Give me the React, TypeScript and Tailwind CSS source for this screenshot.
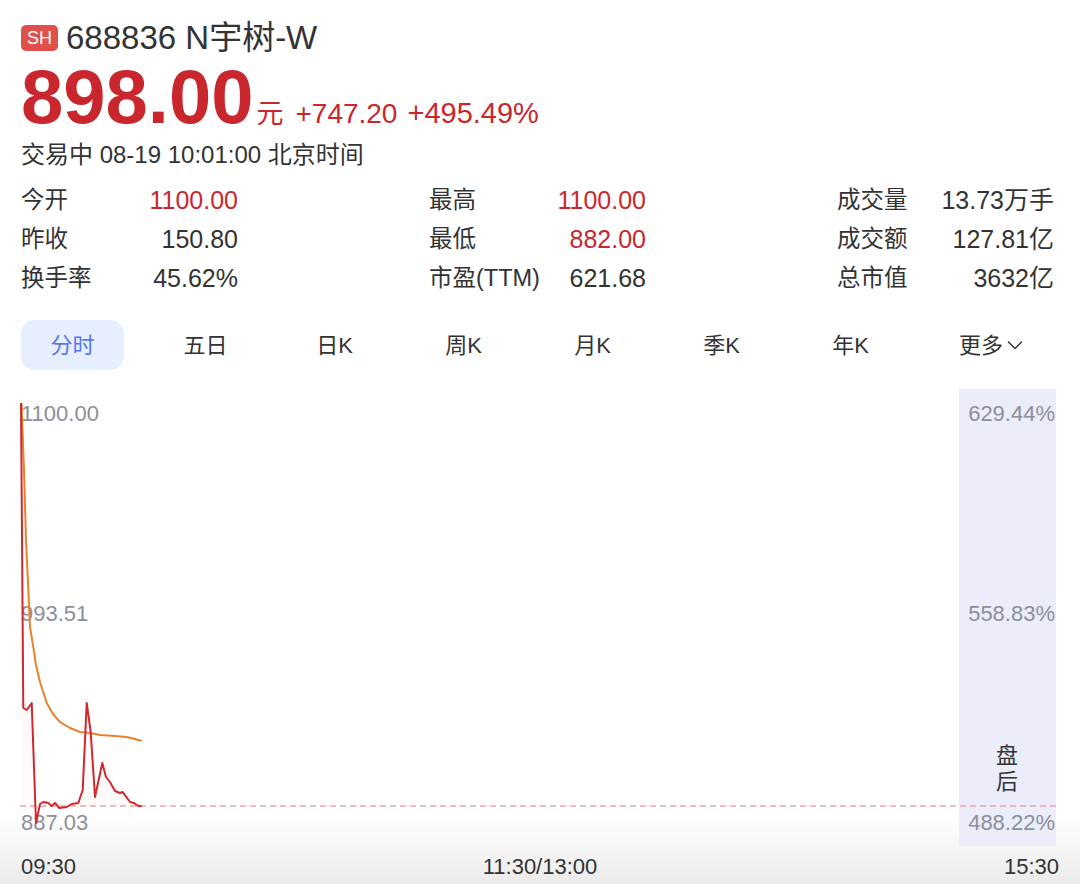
import React from "react";

// intraday quote card for a newly listed stock
const FONT = "'Liberation Sans','Noto Sans CJK SC',sans-serif";

const stats: { label: string; value: string; red?: boolean }[][] = [
  [
    { label: "今开", value: "1100.00", red: true },
    { label: "最高", value: "1100.00", red: true },
    { label: "成交量", value: "13.73万手" },
  ],
  [
    { label: "昨收", value: "150.80" },
    { label: "最低", value: "882.00", red: true },
    { label: "成交额", value: "127.81亿" },
  ],
  [
    { label: "换手率", value: "45.62%" },
    { label: "市盈(TTM)", value: "621.68" },
    { label: "总市值", value: "3632亿" },
  ],
];

const tabs = ["五日", "日K", "周K", "月K", "季K", "年K"];

// price line, already in chart coordinates
const pricePts: [number, number][] = [
  [21, 14], [23.3, 319], [26.7, 321], [31.7, 314], [36, 434], [40, 415],
  [43.3, 413], [48.3, 414], [51.7, 417], [55, 414], [59.3, 419], [66.7, 418],
  [71.7, 415], [78.3, 414], [82.7, 401], [86.7, 314], [90.7, 343], [95, 408],
  [102.3, 374], [106, 388], [110, 393], [115, 402], [120, 404], [122.7, 403],
  [130, 413], [134, 414], [138.3, 417], [141.7, 417],
];

// average price line
const avgPts: [number, number][] = [
  [21.5, 14], [24, 81], [26, 151], [28.3, 201], [30, 238], [33.3, 258],
  [36, 276], [40, 293], [46.7, 314], [53, 325], [60, 333], [70, 339],
  [80, 343], [90, 344], [100, 346], [115, 347], [126.7, 348], [135, 350],
  [141.7, 352],
];

const toPath = (pts: [number, number][]) =>
  pts.map(([x, y], i) => `${i === 0 ? "M" : "L"}${x} ${y}`).join(" ");

function Chart() {
  const fillPath = `${toPath(pricePts)} L141.7 417 L21 417 Z`;
  return (
    <svg width={1080} height={460} viewBox="0 0 1080 460" className="block">
      <defs>
        <linearGradient id="priceFill" x1="0" y1="0" x2="0" y2="1">
          <stop offset="0%" stopColor="#e23a3a" stopOpacity="0.06" />
          <stop offset="100%" stopColor="#e23a3a" stopOpacity="0.02" />
        </linearGradient>
      </defs>
      <rect x={959} y={0} width={97} height={457} fill="#ebedfb" />
      <path d={fillPath} fill="url(#priceFill)" />
      <line
        x1={20}
        y1={417}
        x2={1056}
        y2={417}
        stroke="#f2a3a3"
        strokeWidth={1.5}
        strokeDasharray="6 4"
      />
      <g fontFamily={FONT} fontSize={22} fill="#8d8f99">
        <text x={21} y={32}>1100.00</text>
        <text x={21} y={232}>993.51</text>
        <text x={21} y={441}>887.03</text>
        <text x={1055} y={32} textAnchor="end">629.44%</text>
        <text x={1055} y={232} textAnchor="end">558.83%</text>
        <text x={1055} y={441} textAnchor="end">488.22%</text>
      </g>
      <g fontFamily={FONT} fontSize={22} fill="#333" textAnchor="middle">
        <text x={1007} y={374}>盘</text>
        <text x={1007} y={400}>后</text>
      </g>
      <path
        d={toPath(avgPts)}
        fill="none"
        stroke="#e8812c"
        strokeWidth={2}
        strokeLinejoin="round"
      />
      <path
        d={toPath(pricePts)}
        fill="none"
        stroke="#d0282e"
        strokeWidth={2}
        strokeLinejoin="round"
      />
    </svg>
  );
}

export default function App() {
  return (
    <div className="w-[1080px] h-[884px] overflow-hidden bg-[linear-gradient(to_bottom,#ffffff_0%,#ffffff_92%,#ebebeb_100%)] text-[#333] font-['Liberation_Sans','Noto_Sans_CJK_SC',sans-serif]">
      <div className="px-[21px]">
        {/* name row */}
        <div className="mt-[22px] h-[32px] flex items-center gap-[8px]">
          <span className="h-[26px] px-[6px] rounded-[5px] bg-[#e0504a] text-white text-[18px] leading-[26px]">
            SH
          </span>
          <span className="text-[33px] leading-[32px]">688836 N宇树-W</span>
        </div>

        {/* price row */}
        <div className="mt-[6px] h-[74px] flex items-baseline text-[#c9272d] leading-none">
          <span className="text-[76px] leading-[74px] font-bold">898.00</span>
          <span className="ml-[3px] text-[27px]">元</span>
          <span className="ml-[12px] text-[28px]">+747.20</span>
          <span className="ml-[10px] text-[29px]">+495.49%</span>
        </div>

        <div className="mt-[6px] text-[24px] leading-[30px]">
          交易中 08-19 10:01:00 北京时间
        </div>

        {/* quote stats */}
        <div className="mt-[11px] flex flex-col">
          {stats.map((row, i) => (
            <div
              key={i}
              className="grid grid-cols-[217px_217px_217px] gap-x-[191px] h-[39px] items-center"
            >
              {row.map((cell) => (
                <div key={cell.label} className="flex justify-between items-center">
                  <span className="text-[23.5px]">{cell.label}</span>
                  <span
                    className={`text-[25px] ${cell.red ? "text-[#c9272d]" : "text-[#333]"}`}
                  >
                    {cell.value}
                  </span>
                </div>
              ))}
            </div>
          ))}
        </div>

        {/* period tabs */}
        <div className="mt-[22px] flex items-center">
          <div className="w-[103px] h-[50px] rounded-[14px] bg-[#e6effd] text-[#5677f0] text-[22px] flex items-center justify-center">
            分时
          </div>
          <div className="ml-[17px] flex">
            {tabs.map((t) => (
              <div key={t} className="w-[129px] text-center text-[22px]">
                {t}
              </div>
            ))}
            <div className="w-[129px] pl-[44px] flex items-center gap-[4px] text-[22px]">
              更多
              <svg width="16" height="10" viewBox="0 0 16 10" fill="none">
                <path
                  d="M1.5 2 L8 8.5 L14.5 2"
                  stroke="#333"
                  strokeWidth="1.5"
                  strokeLinecap="round"
                  strokeLinejoin="round"
                />
              </svg>
            </div>
          </div>
        </div>
      </div>

      <div className="mt-[19px]">
        <Chart />
      </div>

      <div className="px-[21px] mt-[6px] flex justify-between text-[22px] leading-[24px]">
        <span>09:30</span>
        <span>11:30/13:00</span>
        <span>15:30</span>
      </div>
    </div>
  );
}
